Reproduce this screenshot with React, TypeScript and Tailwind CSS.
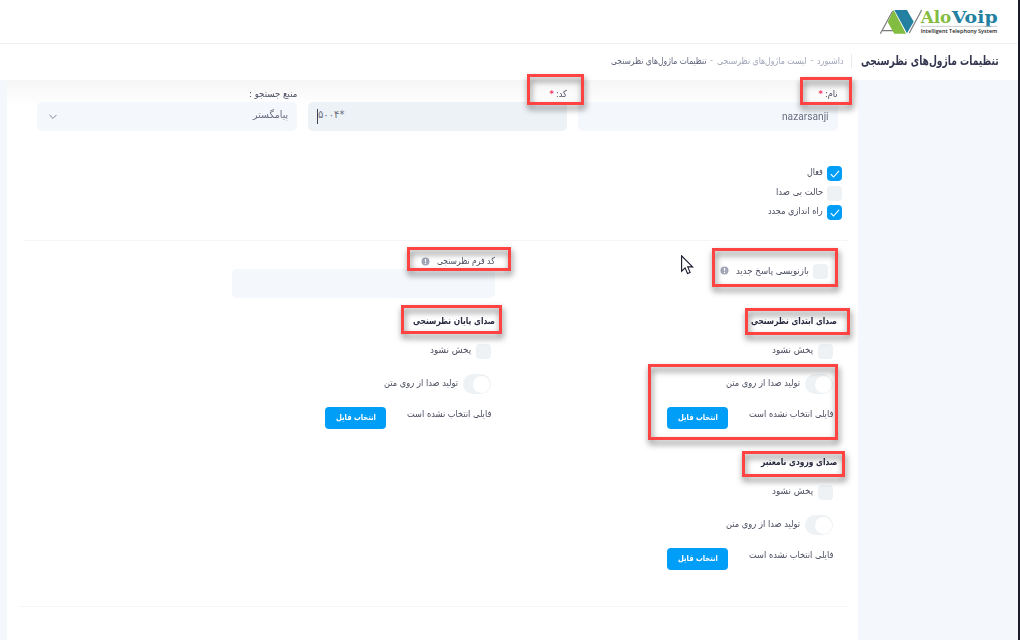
import React, { useLayoutEffect, useRef, useState } from "react";

type FitProps = { w: number; className?: string; children: React.ReactNode };

/** Single line of text condensed horizontally to a fixed width. */
function Fit({ w, className = "", children }: FitProps) {
  const ref = useRef<HTMLSpanElement>(null);
  const [scale, setScale] = useState(1);
  useLayoutEffect(() => {
    if (ref.current) setScale(w / ref.current.offsetWidth);
  }, [w]);
  return (
    <span className={"flex shrink-0 justify-start whitespace-nowrap " + className} style={{ width: w }}>
      <span ref={ref} className="block shrink-0 origin-right" style={{ transform: `scaleX(${scale})` }}>
        {children}
      </span>
    </span>
  );
}

function Check({ on = false }: { on?: boolean }) {
  return (
    <span className={"flex size-[15px] shrink-0 items-center justify-center rounded-[4px] " + (on ? "bg-[#009ef7]" : "bg-[#eef2f5]")}>
      {on && (
        <svg width="10" height="8" viewBox="0 0 10 8" fill="none" stroke="white" strokeWidth="1.1" strokeLinecap="round" strokeLinejoin="round">
          <path d="M1 4.4 3.6 7 8.8 1.2" />
        </svg>
      )}
    </span>
  );
}

function Info() {
  return (
    <svg className="shrink-0" width="9" height="9" viewBox="0 0 9 9">
      <circle cx="4.5" cy="4.5" r="4" fill="#a1a5b7" />
      <path d="M3.9 2h1.2v2.8H3.9zM3.9 5.7h1.2v1.2H3.9z" fill="#fff" />
    </svg>
  );
}

function Logo() {
  return (
    <svg width="120" height="32" viewBox="57 24 360 96" direction="ltr">
      <path d="M61 101 98 33M67 92h34" stroke="#77797b" strokeWidth="3.5" fill="none" />
      <path d="M101 30 138 101H103L83 66z" fill="#82bc41" />
      <path d="M103 30h38l20 35-20 35z" fill="#2380a0" />
      <path d="M148 99 185 30" stroke="#77797b" strokeWidth="3.5" fill="none" />
      <g fontFamily="DejaVu Serif" fontWeight="700" fontSize="49">
        <text x="182" y="68" textLength="92" lengthAdjust="spacingAndGlyphs" fill="#82bc41">Alo</text>
        <text x="275" y="68" textLength="138" lengthAdjust="spacingAndGlyphs" fill="#2380a0">Voip</text>
      </g>
      <path d="M182 79h230" stroke="#bfc3c5" strokeWidth="2.5" />
      <text x="182" y="100" textLength="230" lengthAdjust="spacingAndGlyphs" fontFamily="Open Sans" fontWeight="600" fontSize="17" fill="#222">
        Intelligent Telephony System
      </text>
    </svg>
  );
}

function Voice({ title, titleWidth }: { title: string; titleWidth: number }) {
  return (
    <section className="flex h-[141px] flex-col items-start">
      <div className="flex h-[29px] items-center pb-[1px] font-bold text-[#2a2d42]">
        <Fit w={titleWidth}>{title}</Fit>
      </div>
      <div className="mr-[4px] flex h-[31px] items-center gap-[5px]">
        <Check />
        <Fit w={41} className="pb-[3px]">پخش نشود</Fit>
      </div>
      <div className="mr-[4px] flex h-[34px] items-center gap-[5px]">
        <span className="flex h-[20px] w-[28px] items-center justify-start rounded-full bg-[#eef2f5] px-[1px]">
          <span className="size-[17px] rounded-full bg-white" />
        </span>
        <Fit w={74} className="pb-[3px]">تولید صدا از روی متن</Fit>
      </div>
      <div className="mr-[4px] flex h-[34px] items-center">
        <Fit w={84} className="ml-[21px] pb-[8px]">فایلی انتخاب نشده است</Fit>
        <button className="flex h-[22px] w-[61px] items-center justify-center rounded-[4px] bg-[#009ef7] pb-[3px] text-[8.5px] font-bold text-white">
          <Fit w={40}>انتخاب فایل</Fit>
        </button>
      </div>
    </section>
  );
}

function Mark({ className }: { className: string }) {
  return <div className={"absolute border-[3px] border-[#ff4343] drop-shadow-[1px_4px_3px_rgba(0,0,0,0.55)] " + className} />;
}

function Label({ children, w, required = false }: { children: React.ReactNode; w: number; required?: boolean }) {
  return (
    <div className="flex items-center gap-px pt-[6px]">
      <Fit w={w}>{children}</Fit>
      {required && <span className="mr-px pt-px text-[8.5px] font-bold leading-none text-[#f1416c]">*</span>}
    </div>
  );
}

export default function App() {
  return (
    <div dir="rtl" className="relative h-[640px] w-[1020px] overflow-hidden border-r-2 border-[#1b1b2b] bg-[#f4f7fb] font-['DejaVu_Sans',sans-serif] text-[9.5px] leading-[14px] text-[#4a4d5f]">
      <header className="flex h-[44px] items-start border-b border-[#eff2f5] bg-white pr-[19px] pt-[8px]">
        <Logo />
      </header>
      <nav className="flex h-[36px] items-center bg-white pb-[2px] pr-[19px]">
        <Fit w={138} className="text-[13px] font-bold text-[#34364f]">تنظیمات ماژول‌های نظرسنجی</Fit>
        <span className="ml-[8px] mr-[9px] h-[14px] w-px bg-[#e8eaf0]" />
        <Fit w={26} className="text-[#a1a5b7]">داشبورد</Fit>
        <span className="w-[10px] text-center text-[8px] text-[#a1a5b7]">-</span>
        <Fit w={90} className="text-[#a1a5b7]">لیست ماژول‌های نظرسنجی</Fit>
        <span className="w-[11px] text-center text-[8px] text-[#a1a5b7]">-</span>
        <Fit w={96} className="text-[#5e6278]">تنظیمات ماژول‌های نظرسنجی</Fit>
      </nav>

      <main className="mr-[160px] h-[560px] w-[851px] bg-white bg-linear-to-b from-[#f6f6f7] to-white to-[26px]">
        <div className="grid grid-cols-[260px_259px_260px] grid-rows-[22px_29px] gap-x-[11px] pr-[20px]">
          <Label w={13} required>نام:</Label>
          <Label w={11} required>کد:</Label>
          <Label w={48}>منبع جستجو :</Label>
          <div className="flex items-center rounded-[5px] bg-[#f4f7fb] pb-[2px] pr-[9px] font-['Roboto',sans-serif] text-[11.5px] text-[#6a6d80]">
            <Fit w={47}>nazarsanji</Fit>
          </div>
          <div dir="ltr" className="flex items-center rounded-[5px] bg-[#edf2f6] pl-[9px] text-[10px] text-[#6a6d80]">
            <span className="h-[15px] w-px bg-[#3f4254]" />
            <span className="pb-[3px] tracking-[-0.6px]">۵۰۰۴*</span>
          </div>
          <div className="flex items-center justify-between rounded-[5px] bg-[#f4f7fb] pl-[12px] pr-[9px] text-[10px] text-[#6a6d80]">
            <Fit w={35} className="pb-[3px]">پیامگستر</Fit>
            <svg width="8" height="6" viewBox="0 0 8 6" fill="none" stroke="#7e8299" strokeWidth="1" strokeLinecap="round" strokeLinejoin="round">
              <path d="m.8 1.2 3.2 3.2 3.2-3.2" />
            </svg>
          </div>
        </div>

        <div className="flex flex-col gap-[4.5px] pr-[16px] pt-[35px]">
          <div className="flex h-[15px] items-center gap-[4px]"><Check on /><Fit w={16} className="pb-[3px]">فعال</Fit></div>
          <div className="flex h-[15px] items-center gap-[4px]"><Check /><Fit w={47} className="pb-[3px]">حالت بی صدا</Fit></div>
          <div className="flex h-[15px] items-center gap-[4px]"><Check on /><Fit w={55} className="pb-[3px]">راه اندازی مجدد</Fit></div>
        </div>

        <hr className="ml-[16px] mr-[10px] mt-[20px] border-[#f3f5f7]" />

        <div className="grid grid-cols-[342px_263px] pr-[21px]">
          <div className="flex h-[66px] items-start gap-[4px] pr-[9px] pt-[23px]">
            <Check />
            <Fit w={73}>بازنویسی پاسخ جدید</Fit>
            <span className="mr-[3px] pt-[2px]"><Info /></span>
          </div>
          <div className="flex flex-col">
            <div className="flex h-[28px] items-center gap-[7px] pt-[12px]">
              <Fit w={58}>کد فرم نظرسنجی</Fit>
              <Info />
            </div>
            <div className="h-[29px] w-[263px] rounded-[5px] bg-[#f4f7fb]" />
          </div>
          <Voice title="صدای ابتدای نظرسنجی" titleWidth={86} />
          <Voice title="صدای پایان نظرسنجی" titleWidth={82} />
          <Voice title="صدای ورودی نامعتبر" titleWidth={76} />
        </div>

        <hr className="ml-[12px] mr-[10px] mt-[17px] border-[#f3f5f7]" />
      </main>

      <Mark className="left-[800px] top-[77px] h-[28px] w-[52px]" />
      <Mark className="left-[527px] top-[74px] h-[31px] w-[57px]" />
      <Mark className="left-[712px] top-[248px] h-[39px] w-[126px]" />
      <Mark className="left-[407px] top-[247px] h-[24px] w-[104px]" />
      <Mark className="left-[745px] top-[308px] h-[27px] w-[105px]" />
      <Mark className="left-[401px] top-[305px] h-[29px] w-[101px]" />
      <Mark className="left-[648px] top-[364px] h-[76px] w-[190px]" />
      <Mark className="left-[742px] top-[451px] h-[26px] w-[103px]" />

      <svg className="absolute left-[681px] top-[255px]" width="13" height="20" viewBox="0 0 13 20">
        <path d="M.6.8v15.4l3.5-3.3 2.4 5.6 2.6-1.1-2.4-5.5h4.9z" fill="#fff" stroke="#15152a" strokeWidth="1.1" />
      </svg>
    </div>
  );
}
